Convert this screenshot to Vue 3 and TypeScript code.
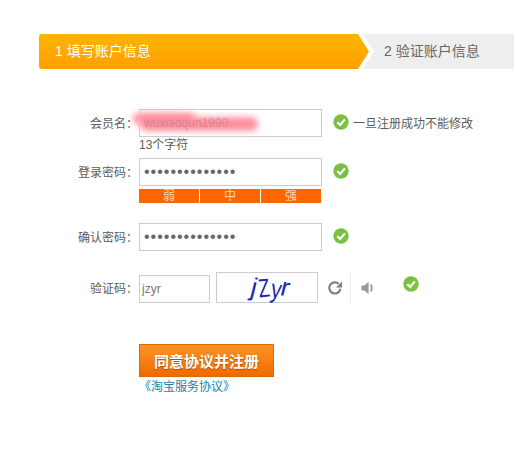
<script setup lang="ts">
  const strength = ['弱', '中', '强']
  const captcha = ['j', 'Z', 'y', 'r']
  const checkPath = 'M4.3 8.2 7.2 11 11.9 5.4'
</script>

<template>
  <div class="page">
    <div class="steps">
      <div class="step-gap">
        <div class="step-first">1 填写账户信息</div>
      </div>
      <div class="step-second">2 验证账户信息</div>
    </div>

    <form class="form" @submit.prevent>
      <div class="row row-name">
        <label class="label">会员名：</label>
        <div class="field">
          <div class="smear"></div>
          <div class="smear smear-left"></div>
          <input class="input input-name" type="text" value="wuxiaoqun1990" />
        </div>
        <svg class="check" viewBox="0 0 16 16"><circle cx="8" cy="8" r="7.7" fill="#7ac143" /><path :d="checkPath" /></svg>
        <span class="note">一旦注册成功不能修改</span>
      </div>
      <div class="hint">13个字符</div>

      <div class="row row-pwd">
        <label class="label">登录密码：</label>
        <input class="input input-pwd" type="password" value="abcdefghijklmn" />
        <svg class="check" viewBox="0 0 16 16"><circle cx="8" cy="8" r="7.7" fill="#7ac143" /><path :d="checkPath" /></svg>
      </div>
      <div class="strength">
        <span v-for="s in strength" :key="s">{{ s }}</span>
      </div>

      <div class="row row-confirm">
        <label class="label">确认密码：</label>
        <input class="input input-pwd" type="password" value="abcdefghijklmn" />
        <svg class="check" viewBox="0 0 16 16"><circle cx="8" cy="8" r="7.7" fill="#7ac143" /><path :d="checkPath" /></svg>
      </div>

      <div class="row row-code">
        <label class="label">验证码：</label>
        <input class="input input-code" type="text" value="jzyr" />
        <div class="captcha">
          <span v-for="c in captcha" :key="c" :class="'cap-' + c">{{ c }}</span>
        </div>
        <svg class="tool" viewBox="0 0 16 16" width="16" height="16">
          <path d="M13.4 8.8A5.6 5.6 0 1 1 11.7 3.8" fill="none" stroke="#808080" stroke-width="2.2" />
          <path d="M15 1.4V7.4H9Z" fill="#808080" />
        </svg>
        <div class="divider"></div>
        <svg class="tool tool-sound" viewBox="0 0 16 16" width="16" height="16">
          <path d="M1.5 5.4H4.6L8.6 1.8V14.2L4.6 10.6H1.5Z" fill="#9a9a9a" />
          <path d="M10.6 4.6Q13 8 10.6 11.4" fill="none" stroke="#9a9a9a" stroke-width="1.8" />
        </svg>
        <svg class="check check-code" viewBox="0 0 16 16"><circle cx="8" cy="8" r="7.7" fill="#7ac143" /><path :d="checkPath" /></svg>
      </div>

      <button class="submit" type="submit">同意协议并注册</button>
      <a class="terms" href="#">《淘宝服务协议》</a>
    </form>
  </div>
</template>

<style>
body {
  background: #fff;
}
</style>

<style scoped>
.page {
  width: 516px;
  height: 462px;
  box-sizing: border-box;
  padding: 34px 2px 0 39px;
  overflow: hidden;
  font-family: "Liberation Sans", "Noto Sans CJK SC", sans-serif;
  font-size: 12px;
  color: #5c5c5c;
}

.steps {
  display: flex;
  height: 35px;
}

.step-gap {
  position: relative;
  z-index: 1;
  width: 335px;
  flex: none;
  background: #fff;
  clip-path: polygon(0 0, 324px 0, 100% 50%, 324px 100%, 0 100%);
}

.step-first {
  width: 330px;
  height: 35px;
  box-sizing: border-box;
  padding-left: 16px;
  line-height: 35px;
  font-size: 14px;
  color: #fff;
  border-radius: 3px 0 0 3px;
  background: linear-gradient(#ffb400, #ff9f00);
  clip-path: polygon(0 0, 319px 0, 100% 50%, 319px 100%, 0 100%);
}

.step-second {
  flex: 1;
  margin-left: -14px;
  padding-left: 24px;
  line-height: 35px;
  font-size: 14px;
  color: #666;
  background: #eee;
}

.form {
  display: flex;
  flex-direction: column;
  align-items: flex-start;
  padding-top: 40px;
}

.row {
  display: flex;
  align-items: center;
  height: 28px;
}

.label {
  width: 99px;
  margin: -2px 1px 0 0;
  text-align: right;
  flex: none;
  white-space: nowrap;
}

.field {
  position: relative;
}

.input {
  display: block;
  box-sizing: border-box;
  width: 183px;
  height: 28px;
  margin: 0;
  padding: 0 4px;
  border: 1px solid #ccc;
  background: #fff;
  outline: none;
  font-family: inherit;
  font-size: 12px;
  color: #777;
}

.input-name {
  position: relative;
  background: transparent;
  color: rgba(170, 120, 130, 0.55);
}

.input-pwd {
  font-size: 16px;
  letter-spacing: 1px;
  color: #666;
}

.input-code {
  width: 71px;
  padding-left: 2px;
  margin-top: 2px;
}

.smear {
  position: absolute;
  top: 8px;
  left: 1px;
  width: 118px;
  height: 14px;
  border-radius: 7px;
  background: #ff8f9c;
  filter: blur(3px);
}

.smear-left {
  top: 4px;
  left: -6px;
  width: 62px;
  height: 11px;
}

.check {
  width: 16px;
  height: 16px;
  margin: -2px 0 0 11px;
  flex: none;
}

.check path {
  fill: none;
  stroke: #fff;
  stroke-width: 2.2;
}

.note {
  margin: -2px 0 0 4px;
  white-space: nowrap;
}

.hint {
  margin: 1px 0 0 100px;
  height: 14px;
  line-height: 14px;
}

.row-pwd {
  margin-top: 6px;
}

.strength {
  display: grid;
  grid-template-columns: repeat(3, 1fr);
  gap: 1px;
  width: 182px;
  height: 14px;
  margin: 3px 0 0 100px;
  background: #fff;
}

.strength span {
  background: #ff6600;
  color: #ffd9b8;
  font-size: 12px;
  line-height: 14px;
  text-align: center;
}

.row-confirm {
  margin-top: 20px;
}

.row-code {
  margin-top: 20px;
  height: 33px;
}

.row-code .label {
  margin-top: -1px;
}

.captcha {
  display: flex;
  justify-content: center;
  align-items: center;
  box-sizing: border-box;
  width: 102px;
  height: 31px;
  margin-left: 6px;
  padding-left: 6px;
  border: 1px solid #ccc;
  color: #1c2bb5;
  font-family: "Liberation Sans", sans-serif;
  font-size: 26px;
  line-height: 1;
}

.captcha span {
  display: block;
}

.cap-j {
  margin-right: -1px;
  transform: rotate(14deg) translateY(-1px);
}

.cap-Z {
  margin-right: -2px;
  transform: rotate(-6deg) scaleX(0.72);
}

.cap-y {
  margin-right: -2px;
  transform: rotate(10deg) translateY(1px) scaleX(0.8);
}

.cap-r {
  transform: rotate(14deg) translateY(-1px);
}

.tool {
  flex: none;
  margin: 1px 0 0 9px;
}

.divider {
  width: 1px;
  height: 33px;
  margin-left: 7px;
  background: #eee;
}

.tool-sound {
  margin-left: 9px;
}

.check-code {
  margin: -7px 0 0 27px;
}

.submit {
  width: 135px;
  height: 33px;
  margin: 40px 0 0 100px;
  padding: 0;
  border: 1px solid #d96b00;
  background: linear-gradient(#ff9326, #ee6a00);
  color: #fff;
  font-family: inherit;
  font-size: 15px;
  font-weight: bold;
  text-shadow: 0 1px 1px #a34f00;
}

.terms {
  margin: 0 0 0 100px;
  color: #15859f;
  text-decoration: none;
  white-space: nowrap;
}
</style>
